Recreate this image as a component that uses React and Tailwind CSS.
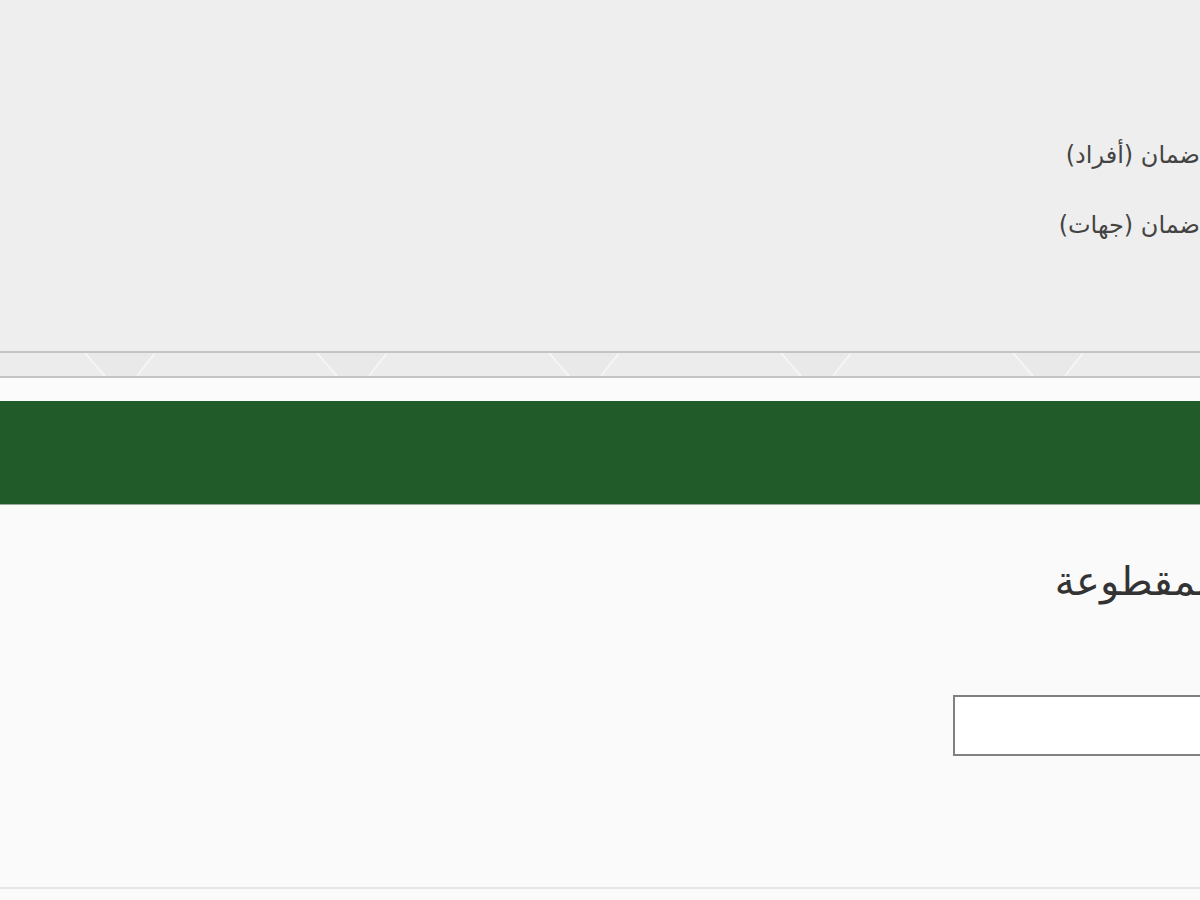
import React from "react";

// decorative band between the header and the green bar
function NotchBand() {
  const notches = [85, 317, 549, 781, 1013];
  return (
    <svg width="1200" height="23" className="block">
      <rect width="1200" height="23" fill="#ececec" />
      {notches.map((x) => (
        <g key={x}>
          <polygon points={`${x},0 ${x + 70},0 ${x + 52},23 ${x + 20},23`} fill="#e9e9e9" />
          <line x1={x} y1="0" x2={x + 20} y2="23" stroke="#f8f8f8" strokeWidth="1.5" />
          <line x1={x + 70} y1="0" x2={x + 52} y2="23" stroke="#f8f8f8" strokeWidth="1.5" />
        </g>
      ))}
    </svg>
  );
}

export default function App() {
  return (
    <div className="w-[1200px] h-[900px] overflow-hidden bg-[#fafafa] font-['DejaVu_Sans',sans-serif]">
      {/* header */}
      <div className="h-[351px] bg-[#eeeeee]">
        <div dir="rtl" className="mr-0 pt-[140px] flex flex-col gap-[40px] text-[24px] leading-[30px] text-[#444]">
          <div>ضمان (أفراد)</div>
          <div>ضمان (جهات)</div>
        </div>
      </div>
      <div className="h-[2px] bg-[#c4c4c4]" />
      <NotchBand />
      <div className="h-[2px] bg-[#c4c4c4]" />
      <div className="h-[23px] bg-[#fbfbfb]" />
      <div className="h-[104px] bg-[#215b2a] border-b border-[#9aa89c]" />

      {/* content */}
      <div dir="rtl" className="-mr-[30px]">
        <h2 className="-mr-[107px] pt-[48px] text-[40px] leading-[56px] text-[#333] whitespace-nowrap">
          المبالغ المقطوعة
        </h2>
        <div className="pt-[86px]">
          <input className="block w-[277px] h-[61px] border-2 border-[#808080] bg-white outline-none" />
        </div>
      </div>
      <div className="mt-[131px] h-[2px] bg-[#e6e6e6]" />
    </div>
  );
}
